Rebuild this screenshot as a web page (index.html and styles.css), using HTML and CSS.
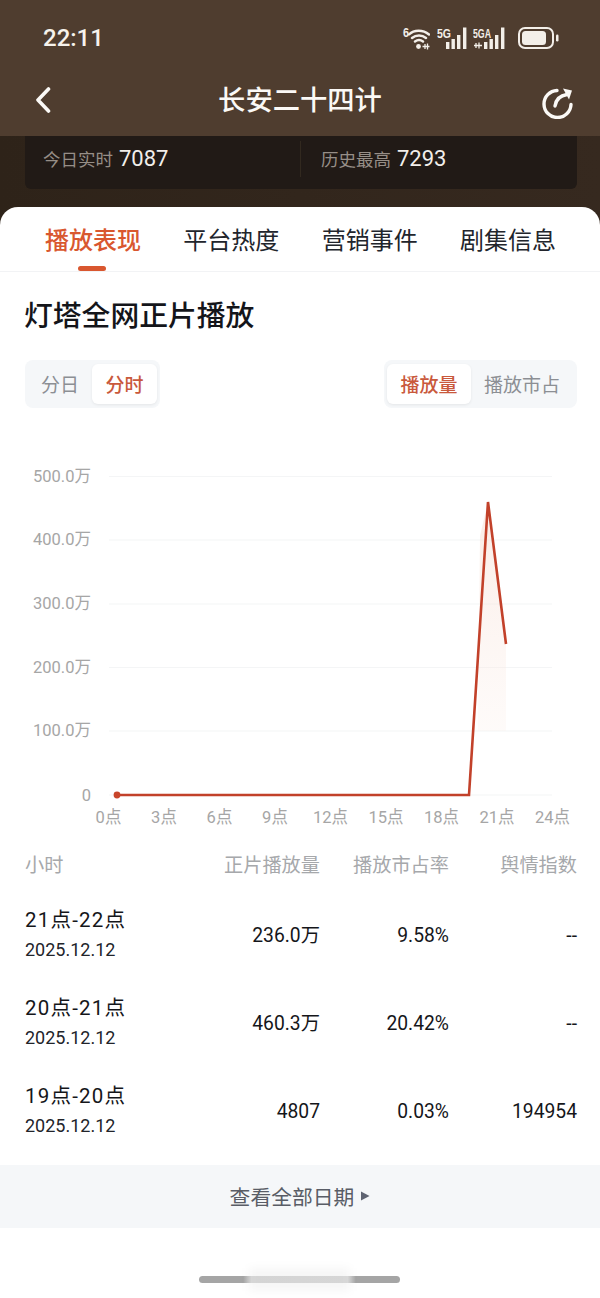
FILE: index.html
```html
<!DOCTYPE html>
<html lang="zh-CN">
<head>
<meta charset="utf-8">
<title>长安二十四计</title>
<link rel="stylesheet" href="styles.css">
</head>
<body>
<div class="page">
  <header class="top">
    <div class="status">
      <span class="time">22:11</span>
      <div class="status-icons">
        <svg class="ic-wifi" viewBox="0 0 30 24" width="30" height="24">
          <text x="3" y="11" class="st-txt" textLength="6" lengthAdjust="spacingAndGlyphs">6</text>
          <path d="M9 8.500C14 3.500 23 3.500 29 8.500M12 12c4-3.400 10-3.400 14 0M15 15.500c2.400-1.800 5.600-1.800 8 0" fill="none" stroke="#f3efe9" stroke-width="2.400" stroke-linecap="round"/>
          <circle cx="18.500" cy="20.500" r="2.400" fill="#f3efe9"/>
          <path d="M22.500 20.500h7M25 18v5M27.500 17.500v6" stroke="#f3efe9" stroke-width="1.300" fill="none"/>
        </svg>
        <svg class="ic-sig" viewBox="0 0 31 24" width="31" height="24">
          <text x="0" y="12" class="st-txt" textLength="14" lengthAdjust="spacingAndGlyphs">5G</text>
          <path d="M9 16h3.400v7H9zM14.500 13h3.400v10h-3.400zM20 9h3.400v14H20zM26 1.500h3.400V23H26z" fill="#f3efe9"/>
        </svg>
        <svg class="ic-sig2" viewBox="0 0 36 24" width="36" height="24">
          <text x="0" y="12" class="st-txt" textLength="18" lengthAdjust="spacingAndGlyphs">5GA</text>
          <path d="M1 19.500h8M3 17v5M6 16.500v6" stroke="#f3efe9" stroke-width="1.300" fill="none"/>
          <path d="M11 16h3.400v7H11zM16.500 13h3.400v10h-3.400zM22 9h3.400v14H22zM28 1.500h3.400V23H28z" fill="#f3efe9"/>
        </svg>
        <svg class="ic-bat" viewBox="0 0 41 22" width="41" height="22">
          <rect x="1" y="1" width="34" height="20" rx="6" fill="none" stroke="#f3efe9" stroke-width="2"/>
          <rect x="4" y="4" width="24" height="14" rx="3.500" fill="#f3efe9"/>
          <rect x="38" y="7.500" width="2.500" height="7" rx="1.200" fill="#f3efe9"/>
        </svg>
      </div>
    </div>
    <nav class="nav">
      <svg class="back" viewBox="0 0 16 26" width="16" height="26"><path d="M13.500 2 3 13l10.500 11" fill="none" stroke="#fbf9f6" stroke-width="3.600" stroke-linecap="round" stroke-linejoin="round"/></svg>
      <h1 class="nav-title">长安二十四计</h1>
      <svg class="share" viewBox="0 0 34 34" width="34" height="34"><path d="M16 5.500A13.500 13.500 0 1 0 30 19.500" fill="none" stroke="#fbf9f6" stroke-width="3.400" stroke-linecap="round"/><path d="M14 21C15 14 19 10.500 26 9.500" fill="none" stroke="#fbf9f6" stroke-width="3.400" stroke-linecap="round"/><path d="M22 3.500 31 5.500 28 14.500Z" fill="#fbf9f6"/></svg>
    </nav>
  </header>

  <section class="hero">
    <div class="stats">
      <div class="stat stat-a"><span class="stat-k">今日实时</span><span class="stat-v">7087</span></div>
      <div class="stat stat-b"><span class="stat-k">历史最高</span><span class="stat-v">7293</span></div>
    </div>
  </section>

  <main class="sheet">
    <div class="tabs">
      <div class="tab tab-on">播放表现</div>
      <div class="tab">平台热度</div>
      <div class="tab">营销事件</div>
      <div class="tab">剧集信息</div>
    </div>

    <h2 class="title">灯塔全网正片播放</h2>

    <div class="controls">
      <div class="seg">
        <span class="seg-i">分日</span>
        <span class="seg-i seg-on">分时</span>
      </div>
      <div class="seg seg-r">
        <span class="seg-i seg-on">播放量</span>
        <span class="seg-i">播放市占</span>
      </div>
    </div>

    <svg class="chart" viewBox="0 0 600 416" width="600" height="416">
      <defs>
        <linearGradient id="area" x1="0" y1="0" x2="0" y2="1">
          <stop offset="0" stop-color="#f6d9cd" stop-opacity=".5"/>
          <stop offset="1" stop-color="#fbeee8" stop-opacity=".25"/>
        </linearGradient>
      </defs>
      <g class="grid">
        <path d="M109 60.500H552M109 124H552M109 188H552M109 251.500H552M109 315H552M109 379H552"/>
      </g>
      <g class="yl">
        <text x="91" y="66">500.0万</text>
        <text x="91" y="129">400.0万</text>
        <text x="91" y="193">300.0万</text>
        <text x="91" y="257">200.0万</text>
        <text x="91" y="320">100.0万</text>
        <text x="91" y="385">0</text>
      </g>
      <g class="xl">
        <text x="108.500" y="407">0点</text>
        <text x="164" y="407">3点</text>
        <text x="219.500" y="407">6点</text>
        <text x="275" y="407">9点</text>
        <text x="330.500" y="407">12点</text>
        <text x="386" y="407">15点</text>
        <text x="441.500" y="407">18点</text>
        <text x="497" y="407">21点</text>
        <text x="552.500" y="407">24点</text>
      </g>
      <path d="M480 120 488 86 506 228V315H478Z" fill="url(#area)"/>
      <path d="M117 379H469L488 86 506 228" fill="none" stroke="#c2412a" stroke-width="2.600" stroke-linejoin="miter"/>
      <circle cx="117" cy="379" r="3.400" fill="#c8452b"/>
    </svg>

    <div class="table">
      <div class="thead">
        <span class="th-l">小时</span>
        <span>正片播放量</span>
        <span>播放市占率</span>
        <span>舆情指数</span>
      </div>
      <div class="row">
        <div class="when"><span class="hour">21点-22点</span><span class="date">2025.12.12</span></div>
        <span class="val">236.0万</span><span class="val">9.58%</span><span class="val">--</span>
      </div>
      <div class="row">
        <div class="when"><span class="hour">20点-21点</span><span class="date">2025.12.12</span></div>
        <span class="val">460.3万</span><span class="val">20.42%</span><span class="val">--</span>
      </div>
      <div class="row">
        <div class="when"><span class="hour">19点-20点</span><span class="date">2025.12.12</span></div>
        <span class="val">4807</span><span class="val">0.03%</span><span class="val">194954</span>
      </div>
    </div>

    <div class="more">查看全部日期<svg class="more-ic" viewBox="0 0 10 10" width="10" height="10"><path d="M1 0.500 9.500 5 1 9.500Z" fill="#5f6472"/></svg></div>

    <div class="home"><span class="home-bar"></span></div>
  </main>
</div>
</body>
</html>
```

FILE: styles.css
```css
* { box-sizing: border-box; margin: 0; padding: 0; }
html, body { background: #fff; }
body {
  font-family: "Noto Sans CJK SC", "Noto Sans", sans-serif;
  color: #15161a;
}
.page {
  width: 600px;
  height: 1298px;
  overflow: hidden;
  display: flex;
  flex-direction: column;
}
.top { background: #4f3d2f; height: 136px; flex: none; }
.status {
  height: 76px;
  display: flex;
  align-items: center;
  justify-content: space-between;
  padding: 0 41px 0 43px;
}
.time {
  font-family: Roboto, sans-serif;
  font-size: 24px;
  font-weight: 500;
  color: #f6f2ec;
}
.status-icons { display: flex; align-items: center; gap: 5px; margin-top: -1px; }
.ic-wifi { margin-right: 1px; }
.ic-sig { margin-left: 1px; }
.ic-bat { margin-left: 4px; }
.st-txt {
  font-family: "Liberation Sans", sans-serif;
  font-size: 13px;
  font-weight: 700;
  fill: #f3efe9;
}
.nav {
  height: 60px;
  display: flex;
  align-items: center;
  justify-content: space-between;
  padding: 0 25px 0 35px;
  margin-top: -7px;
}
.back { margin-top: 2px; }
.nav-title {
  font-size: 27.300px;
  font-weight: 500;
  color: #fbf9f6;
  line-height: 1;
  margin-left: 8px;
}
.share { margin-top: 5px; }
.hero {
  height: 89px;
  flex: none;
  background: linear-gradient(90deg, #2e2319, #36291f);
  padding: 0 23px 0 25px;
  margin-top: 0;
}
.stats {
  height: 53px;
  background: #211a16;
  border-radius: 0 0 6px 6px;
  display: flex;
  align-items: center;
  padding-bottom: 8px;
}
.stat { display: flex; align-items: center; gap: 6px; height: 36px; }
.stat-a { width: 276px; padding-left: 18px; border-right: 1px solid #32291f; }
.stat-b { padding-left: 20px; }
.stat-k { font-size: 17.500px; color: #968e87; line-height: 1; }
.stat-v { font-family: Roboto, sans-serif; font-size: 22px; color: #f2eeea; line-height: 1; }
.sheet {
  flex: 1;
  position: relative;
  background: #fff;
  border-radius: 18px 18px 0 0;
  margin-top: -18px;
  display: flex;
  flex-direction: column;
}
.tabs {
  height: 65px;
  padding: 0 44px 0 45px;
  display: flex;
  justify-content: space-between;
  align-items: center;
  border-bottom: 1px solid #f2f3f5;
  flex: none;
}
.tab {
  position: relative;
  font-size: 24px;
  color: #22252c;
  line-height: 1;
  width: 96px;
  white-space: nowrap;
}
.tab-on { color: #d9572f; font-weight: 500; }
.tab-on::after {
  content: "";
  position: absolute;
  left: 33px;
  width: 28px;
  top: 39px;
  height: 5px;
  border-radius: 3px;
  background: #d9572f;
}
.title {
  font-size: 28.800px;
  font-weight: 500;
  line-height: 1;
  color: #14151a;
  padding: 28px 25px 0 24px;
  flex: none;
}
.controls {
  display: flex;
  justify-content: space-between;
  padding: 0 23px 0 25px;
  margin-top: 31px;
  flex: none;
}
.seg {
  height: 48px;
  background: #f5f7f9;
  border-radius: 8px;
  padding: 4px 3px;
  display: flex;
  align-items: stretch;
}
.seg-r { padding-right: 4px; }
.seg-i {
  font-size: 19px;
  color: #8c8f94;
  padding: 0 13px;
  display: flex;
  align-items: center;
  line-height: 1;
  white-space: nowrap;
}
.seg-on {
  background: #fff;
  color: #c9593c;
  font-weight: 500;
  border-radius: 6px;
  box-shadow: 0 1px 3px rgba(0, 0, 0, .07);
  padding: 0 13.500px;
}
.chart {
  display: block;
  flex: none;
  margin-top: 8px;
  overflow: visible;
}
.grid path { stroke: #f4f5f6; stroke-width: 1.200; fill: none; }
.yl text {
  font-family: Roboto, "Noto Sans CJK SC", sans-serif;
  font-size: 16.500px;
  fill: #a6a6a6;
  text-anchor: end;
}
.xl text {
  font-family: Roboto, "Noto Sans CJK SC", sans-serif;
  font-size: 16.500px;
  fill: #a6a6a6;
  text-anchor: middle;
}
.table { flex: none; margin-top: 18px; }
.thead, .row {
  display: grid;
  grid-template-columns: 184px 111px 129px 128px;
  padding: 0 23px 0 25px;
  text-align: right;
}
.thead {
  font-size: 19.200px;
  line-height: 28px;
  color: #a6a8ab;
  margin-bottom: 13px;
}
.th-l { text-align: left; }
.row { height: 88px; align-items: center; }
.when { display: flex; flex-direction: column; text-align: left; gap: 4px; }
.hour {
  font-family: Roboto, "Noto Sans CJK SC", sans-serif;
  font-size: 20.500px;
  letter-spacing: 1.200px;
  line-height: 25px;
  color: #15161a;
}
.date {
  font-family: Roboto, "Noto Sans CJK SC", sans-serif;
  font-size: 18px;
  line-height: 25px;
  color: #22242a;
}
.val {
  font-family: Roboto, "Noto Sans CJK SC", sans-serif;
  font-size: 19.300px;
  color: #15161a;
  line-height: 1;
  margin-top: 2px;
}
.more {
  flex: none;
  height: 63px;
  background: #f5f7f9;
  display: flex;
  align-items: center;
  justify-content: center;
  gap: 6px;
  font-size: 20.800px;
  color: #595d66;
  margin-top: 10px;
}
.home {
  flex: 1;
  display: flex;
  justify-content: center;
  padding: 48px 2px 0 0;
}
.home-bar {
  position: relative;
  width: 201px;
  height: 7px;
  border-radius: 4px;
  background: linear-gradient(90deg, #a5a5a5 0, #a5a5a5 22%, #dcdcdc 26%, #dedede 74%, #a5a5a5 78%, #a5a5a5 100%);
}
.home-bar::after {
  content: "";
  position: absolute;
  left: 50px;
  right: 50px;
  top: -8px;
  bottom: -8px;
  background: rgba(0, 0, 0, .035);
  filter: blur(4px);
}
```
